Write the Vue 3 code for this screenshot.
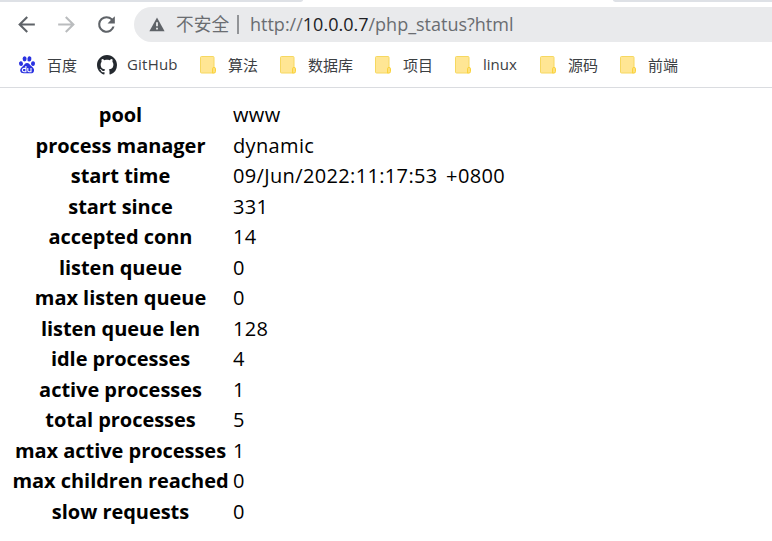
<script setup>
const bookmarks = [
  { icon: 'baidu', label: '百度' },
  { icon: 'github', label: 'GitHub' },
  { icon: 'folder', label: '算法' },
  { icon: 'folder', label: '数据库' },
  { icon: 'folder', label: '项目' },
  { icon: 'folder', label: 'linux' },
  { icon: 'folder', label: '源码' },
  { icon: 'folder', label: '前端' }
]

const rows = [
  ['pool', 'www'],
  ['process manager', 'dynamic'],
  ['start time', '09/Jun/2022:11:17:53 +0800'],
  ['start since', '331'],
  ['accepted conn', '14'],
  ['listen queue', '0'],
  ['max listen queue', '0'],
  ['listen queue len', '128'],
  ['idle processes', '4'],
  ['active processes', '1'],
  ['total processes', '5'],
  ['max active processes', '1'],
  ['max children reached', '0'],
  ['slow requests', '0']
]
</script>

<template>
  <div class="window">
    <div class="tabs">
      <div class="tab-strip left"></div>
      <div class="tab-strip right"></div>
    </div>
    <div class="toolbar">
      <svg class="nav" viewBox="0 0 24 24"><path d="M20 11H7.83l5.59-5.59L12 4l-8 8 8 8 1.41-1.41L7.83 13H20v-2z" fill="#5f6368" /></svg>
      <svg class="nav" viewBox="0 0 24 24"><path d="M12 4l-1.41 1.41L16.17 11H4v2h12.17l-5.58 5.59L12 20l8-8z" fill="#babcbe" /></svg>
      <svg class="nav" viewBox="0 0 24 24"><path d="M17.65 6.35A7.96 7.96 0 0 0 12 4a8 8 0 1 0 7.73 10h-2.08A6 6 0 1 1 12 6c1.66 0 3.14.69 4.22 1.78L13 11h7V4l-2.35 2.35z" fill="#5f6368" /></svg>
      <div class="address">
        <svg class="warning" viewBox="0 0 16 15"><path d="M8 0.5L15.6 14.3H0.4z" fill="#5f6368" /><path d="M7.1 5.3h1.8v4H7.1zM7.1 10.7h1.8v1.8H7.1z" fill="#e9eaec" /></svg>
        <span class="insecure">不安全</span>
        <span class="divider"></span>
        <span class="url">http://<b>10.0.0.7</b>/php_status?html</span>
      </div>
    </div>
    <div class="bookmarks">
      <div v-for="b in bookmarks" :key="b.label" class="bookmark">
        <svg v-if="b.icon === 'baidu'" class="icon" viewBox="0 0 20 20">
          <g fill="#2a32e1">
            <ellipse cx="4" cy="8.6" rx="2" ry="2.4" transform="rotate(-12 4 8.6)" />
            <ellipse cx="7.6" cy="3.8" rx="2" ry="2.6" />
            <ellipse cx="12.4" cy="3.9" rx="2" ry="2.6" transform="rotate(10 12.4 3.9)" />
            <ellipse cx="16" cy="8.6" rx="2" ry="2.4" transform="rotate(8 16 8.6)" />
            <path d="M10 7.9c2.100 0 2.700 1.800 4.200 3.200 1.800 1.500 3.300 2.700 2.800 4.900-.5 2.300-2.600 2.500-4.300 2.300-1.800-.2-3.400-.2-5.200 0-2 .2-4.100-.2-4.300-2.700-.2-2 1.500-3 2.900-4.500C7.500 9.700 8 7.900 10 7.900z" />
          </g>
          <g fill="none" stroke="#fff" stroke-width="1.1">
            <path d="M8.9 11v5.800H6.900q-1.600-.1-1.600-1.700t1.600-1.700h2" />
            <path d="M10.8 13v2.600q0 1.200 1.200 1.200h2V13" />
          </g>
        </svg>
        <svg v-else-if="b.icon === 'github'" class="icon" viewBox="0 0 16 16">
          <path fill="#24292f" d="M8 0C3.58 0 0 3.58 0 8c0 3.54 2.29 6.53 5.47 7.59.4.07.55-.17.55-.38 0-.19-.01-.82-.01-1.49-2.01.37-2.53-.49-2.69-.94-.09-.23-.48-.94-.82-1.13-.28-.15-.68-.52-.01-.53.63-.01 1.08.58 1.23.82.72 1.21 1.87.87 2.33.66.07-.52.28-.87.51-1.07-1.78-.2-3.64-.89-3.64-3.95 0-.87.31-1.59.82-2.15-.08-.2-.36-1.02.08-2.12 0 0 .67-.21 2.2.82.64-.18 1.32-.27 2-.27s1.36.09 2 .27c1.53-1.04 2.2-.82 2.2-.82.44 1.1.16 1.92.08 2.12.51.56.82 1.27.82 2.15 0 3.07-1.87 3.75-3.65 3.95.29.25.54.73.54 1.48 0 1.07-.01 1.93-.01 2.2 0 .21.15.46.55.38A8.01 8.01 0 0 0 16 8c0-4.42-3.58-8-8-8z" />
        </svg>
        <svg v-else class="icon" viewBox="0 0 20 20">
          <rect x="2.5" y="1.5" width="13.5" height="16.5" rx="1" fill="#ffe694" stroke="#f6d860" />
          <path d="M14.5 18v-4.500q0-1 1.500-1t1.500 1v3q0 1.500-1.500 1.500z" fill="#ffe07a" stroke="#fad33b" />
        </svg>
        <span class="label">{{ b.label }}</span>
      </div>
    </div>
    <table class="status">
      <tbody>
        <tr v-for="r in rows" :key="r[0]">
          <th>{{ r[0] }}</th>
          <td>{{ r[1] }}</td>
        </tr>
      </tbody>
    </table>
  </div>
</template>

<style>
body {
  background: #fff;
  overflow: hidden;
}
</style>

<style scoped>
.window {
  width: 772px;
  height: 541px;
  overflow: hidden;
  background: #fff;
  font-family: "Open Sans", "Noto Sans CJK SC", sans-serif;
}
.tabs {
  display: flex;
  justify-content: space-between;
  height: 2px;
}
.tab-strip {
  background: #dee1e6;
}
.left {
  width: 303px;
  border-bottom-right-radius: 4px 2px;
}
.right {
  width: 159px;
  border-bottom-left-radius: 4px 2px;
}
.toolbar {
  display: flex;
  align-items: center;
  gap: 15px;
  height: 45px;
  padding-left: 14px;
}
.nav {
  flex: none;
  width: 25px;
  height: 25px;
}
.address {
  display: flex;
  align-items: center;
  flex: 1;
  height: 35px;
  padding-left: 15px;
  border-radius: 18px 0 0 18px;
  background: #e9eaec;
  color: #6a6d71;
  font-size: 18px;
  line-height: 24px;
  white-space: nowrap;
}
.warning {
  width: 16px;
  height: 15px;
  margin-right: 11px;
}
.insecure {
  width: 61px;
  padding-bottom: 2px;
  font-size: 17.7px;
}
.divider {
  width: 2px;
  height: 19px;
  margin-right: 11px;
  background: #929497;
}
.url {
  padding-bottom: 2px;
}
.url b {
  color: #202124;
  font-weight: 400;
}
.bookmarks {
  display: grid;
  grid-template-columns: 80px 101px 80px 95px 80px 85px 80px 1fr;
  height: 40px;
  padding-left: 17px;
  border-bottom: 1px solid #dadce0;
  color: #3c4043;
  font-size: 15px;
}
.bookmark {
  display: flex;
  align-items: center;
  gap: 10px;
  height: 36px;
  white-space: nowrap;
}
.label {
  padding-bottom: 2px;
}
.icon {
  flex: none;
  width: 20px;
  height: 20px;
}
.bookmark:nth-child(2) {
  letter-spacing: 0.2px;
}
.status {
  margin: 12px 0 0 11px;
  border-collapse: collapse;
  color: #000;
  font-size: 20px;
  line-height: 30px;
}
tr {
  height: 30.5px;
}
th,
td {
  padding: 0;
  white-space: nowrap;
}
th {
  width: 219px;
  min-width: 219px;
  max-width: 219px;
  font-weight: 700;
  letter-spacing: -0.04px;
}
td {
  padding-left: 3px;
  letter-spacing: 0.35px;
  word-spacing: 3px;
}
</style>
